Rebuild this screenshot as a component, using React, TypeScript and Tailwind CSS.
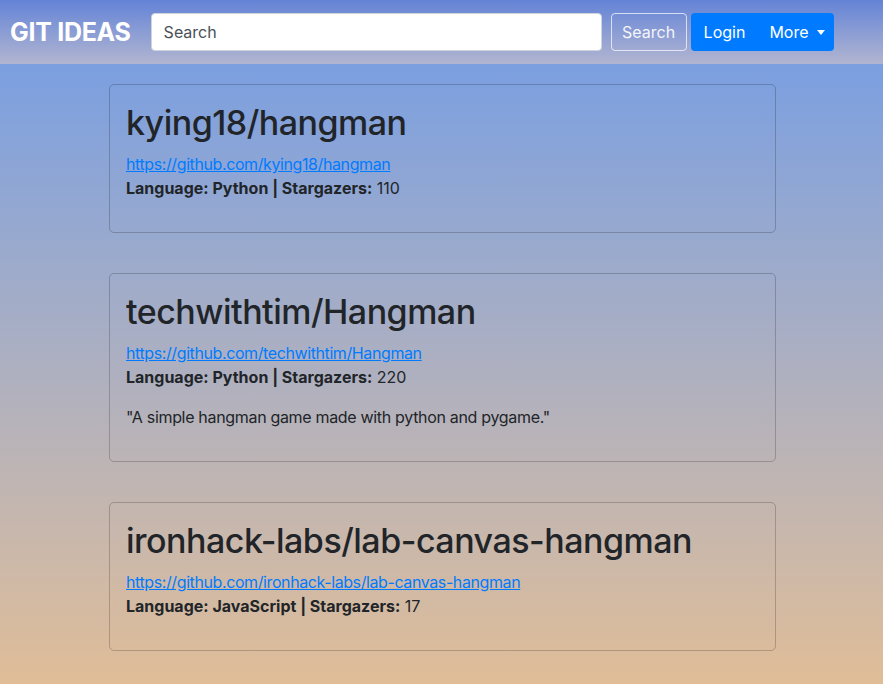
import React from "react";

const repos = [
  {
    name: "kying18/hangman",
    url: "https://github.com/kying18/hangman",
    lang: "Python",
    stars: 110,
    desc: "",
  },
  {
    name: "techwithtim/Hangman",
    url: "https://github.com/techwithtim/Hangman",
    lang: "Python",
    stars: 220,
    desc: '"A simple hangman game made with python and pygame."',
  },
  {
    name: "ironhack-labs/lab-canvas-hangman",
    url: "https://github.com/ironhack-labs/lab-canvas-hangman",
    lang: "JavaScript",
    stars: 17,
    desc: "",
  },
];

export default function App() {
  return (
    <div
      className="min-h-[684px] w-full text-[#212529] text-[16px] leading-[24px]"
      style={{ fontFamily: "Inter, 'Noto Sans', sans-serif" }}
    >
      <nav className="h-[64px] flex items-center px-[10px] bg-gradient-to-b from-[#6483d6] to-[#b2b5d0]">
        <div className="text-white font-bold text-[25px] tracking-[-0.3px] mr-[20px] leading-[30px]">
          GIT IDEAS
        </div>
        <div className="w-[451px] h-[38px] bg-white border border-[#ced4da] rounded-[4px] flex items-center px-[12px] text-[#495057]">
          Search
        </div>
        <div className="ml-[9px] w-[76px] h-[38px] border border-white/70 rounded-[4px] flex items-center justify-center text-[#f4f5fa]">
          Search
        </div>
        <div className="ml-[4px] h-[38px] w-[143px] bg-[#007bff] rounded-[4px] flex items-center text-white pl-[13px]">
          <span>Login</span>
          <span className="ml-[24px]">More</span>
          <span className="ml-[8px] w-0 h-0 border-l-[4px] border-r-[4px] border-t-[5px] border-l-transparent border-r-transparent border-t-white" />
        </div>
      </nav>
      <main className="bg-gradient-to-b from-[#7b9fe0] to-[#e0bd97] min-h-[620px] pt-[20px] pb-[34px] flex flex-col items-center">
        <div className="w-[667px] flex flex-col gap-[40px] ml-[2px]">
          {repos.map((r) => (
            <div
              key={r.name}
              className="border border-black/20 rounded-[5px] p-[16px]"
            >
              <h1 className="text-[34px] tracking-[-0.5px] leading-[43px] font-medium mb-[8px]">
                {r.name}
              </h1>
              <p className="mb-[16px]">
                <a href="#" className="text-[#007bff] underline tracking-[-0.4px]">
                  {r.url}
                </a>
                <br />
                <b>Language: {r.lang} | Stargazers:</b> {r.stars}
              </p>
              {r.desc && <p className="mb-[16px] tracking-[-0.32px]">{r.desc}</p>}
            </div>
          ))}
        </div>
      </main>
    </div>
  );
}
